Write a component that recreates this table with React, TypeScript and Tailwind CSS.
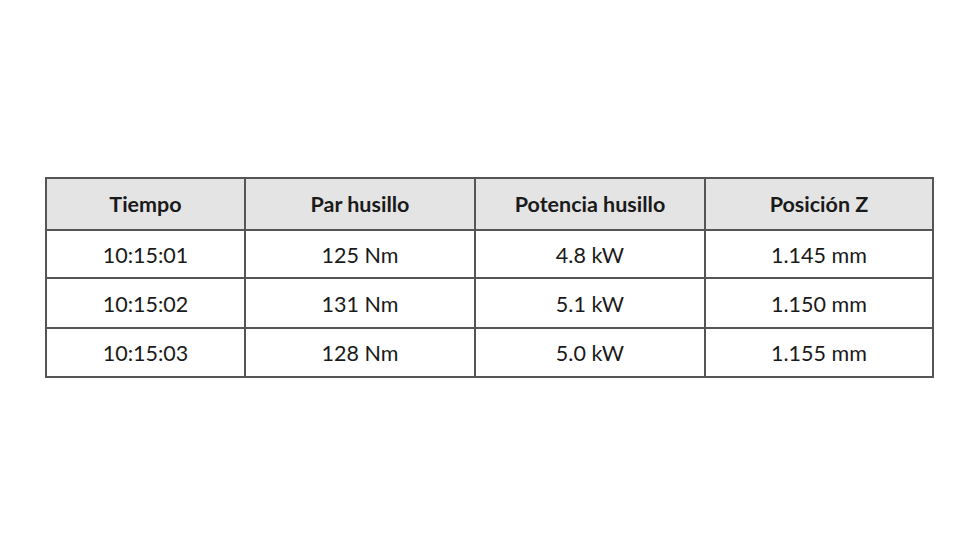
import React from 'react';

const headers = ['Tiempo', 'Par husillo', 'Potencia husillo', 'Posición Z'];

const rows = [
  ['10:15:01', '125 Nm', '4.8 kW', '1.145 mm'],
  ['10:15:02', '131 Nm', '5.1 kW', '1.150 mm'],
  ['10:15:03', '128 Nm', '5.0 kW', '1.155 mm'],
];

const rowHeights = ['h-[48px]', 'h-[50px]', 'h-[49px]'];

const App: React.FC = () => {
  return (
    <div className="w-[980px] h-[560px] bg-white pt-[177px] pl-[45px] font-['Lato','Liberation_Sans',sans-serif] text-[#1a1a1a]">
      <table className="border-collapse w-[887px] table-fixed">
        <colgroup>
          <col className="w-[199px]" />
          <col className="w-[230px]" />
          <col className="w-[230px]" />
          <col className="w-[228px]" />
        </colgroup>
        <thead>
          <tr className="h-[52px] bg-[#e4e4e4]">
            {headers.map((h) => (
              <th key={h} className="border-2 border-[#555] text-[21.5px] font-bold text-center p-0 pt-[1px]">
                {h}
              </th>
            ))}
          </tr>
        </thead>
        <tbody>
          {rows.map((row, i) => (
            <tr key={i} className={rowHeights[i]}>
              {row.map((cell, j) => (
                <td key={j} className="border-2 border-[#555] text-[21.5px] text-center p-0 pt-[2px]">
                  {cell}
                </td>
              ))}
            </tr>
          ))}
        </tbody>
      </table>
    </div>
  );
};

export default App;
